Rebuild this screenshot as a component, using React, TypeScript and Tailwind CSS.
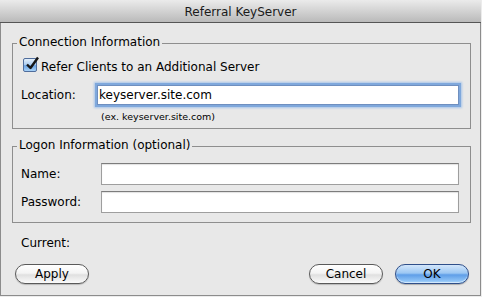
import React from "react";

const font = { fontFamily: '"DejaVu Sans", "Lucida Grande", sans-serif' };

function AquaButton({ label, primary }: { label: string; primary?: boolean }) {
  return (
    <button
      className={`h-[20px] w-[74px] rounded-full border text-[12px] leading-[14px] text-black ${
        primary
          ? "border-[#2f4f8a] bg-[linear-gradient(to_bottom,#d3e6fb_0%,#9cc7f3_45%,#5f9ee8_55%,#9fd0fb_100%)] shadow-[inset_0_-1px_1px_rgba(255,255,255,0.6),0_1px_1px_rgba(0,0,0,0.25)]"
          : "border-[#5a5a5a] bg-[linear-gradient(to_bottom,#ffffff_0%,#f4f4f4_45%,#e0e0e0_55%,#fbfbfb_100%)] shadow-[0_1px_1px_rgba(0,0,0,0.2)]"
      }`}
      style={font}
    >
      {label}
    </button>
  );
}

function Checkbox() {
  return (
    <div className="relative h-[14px] w-[14px] shrink-0 rounded-[2px] border border-[#4f6d9c] bg-[linear-gradient(to_bottom,#e3effb_0%,#a9cbef_50%,#6ba3e3_55%,#a7d2f8_100%)]">
      <svg
        className="absolute -top-[3px] left-[1px]"
        width="15"
        height="15"
        viewBox="0 0 15 15"
      >
        <path
          d="M2 8.5 L5.5 12 L13 1.5"
          fill="none"
          stroke="#151515"
          strokeWidth="2.4"
          strokeLinejoin="round"
        />
      </svg>
    </div>
  );
}

function Field({ width, value, focused }: { width: string; value?: string; focused?: boolean }) {
  return (
    <input
      readOnly
      defaultValue={value}
      className={`${width} ${
        focused
          ? "h-[20px] border border-[#6f8fbf] shadow-[0_0_0_2px_#7fa8dc,0_0_2px_3px_#a8c5ea]"
          : "h-[22px] border border-[#9e9e9e] border-t-[#7c7c7c] shadow-[inset_0_1px_1px_rgba(0,0,0,0.12)]"
      } bg-white pl-[1px] text-[12px] text-black outline-none`}
      style={font}
    />
  );
}

export default function App() {
  return (
    <div className="h-[297px] w-[482px] bg-[#ececec] text-[12px] leading-[14px] text-black" style={font}>
      <div className="flex h-[296px] w-[481px] flex-col">
        {/* Title bar */}
        <div className="flex h-[23px] shrink-0 items-center justify-center border-b border-[#555] bg-[linear-gradient(to_bottom,#ebebeb,#bababa)] pt-[1px] text-[#1a1a1a]">
          Referral KeyServer
        </div>

        <div className="flex flex-1 flex-col border-x border-b border-[#8c8c8c] bg-[#e8e8e8]">
          {/* Connection Information */}
          <fieldset className="ml-[11px] mt-[12px] w-[459px] border border-[#8e8e8e] pb-[5px]">
            <legend className="ml-[4px] px-[2px] pb-[3px] leading-[14px]">Connection Information</legend>
            <div className="mt-[6px] flex items-start pl-[10px]">
              <Checkbox />
              <span className="ml-[4px] mt-[2px]">Refer Clients to an Additional Server</span>
            </div>
            <div className="mt-[11px] flex items-center">
              <span className="w-[84px] pl-[8px]">Location:</span>
              <Field width="w-[362px]" value="keyserver.site.com" focused />
            </div>
            <div className="mt-[6px] pl-[88px] text-[9.5px] leading-[12px]">(ex. keyserver.site.com)</div>
          </fieldset>

          {/* Logon Information */}
          <fieldset className="ml-[11px] mt-[9px] w-[459px] border border-[#8e8e8e] pb-[9px]">
            <legend className="ml-[4px] px-[2px] pb-[3px] leading-[14px]">Logon Information (optional)</legend>
            <div className="mt-[8px] flex items-center">
              <span className="w-[88px] pl-[8px]">Name:</span>
              <Field width="w-[358px]" />
            </div>
            <div className="mt-[6px] flex items-center">
              <span className="w-[88px] pl-[8px]">Password:</span>
              <Field width="w-[358px]" />
            </div>
          </fieldset>

          <div className="ml-[20px] mt-[13px]">Current:</div>

          <div className="mt-[14px] flex items-center pl-[14px] pr-[11px]">
            <AquaButton label="Apply" />
            <div className="flex-1" />
            <div className="flex gap-[12px]">
              <AquaButton label="Cancel" />
              <AquaButton label="OK" primary />
            </div>
          </div>
        </div>
      </div>
    </div>
  );
}
